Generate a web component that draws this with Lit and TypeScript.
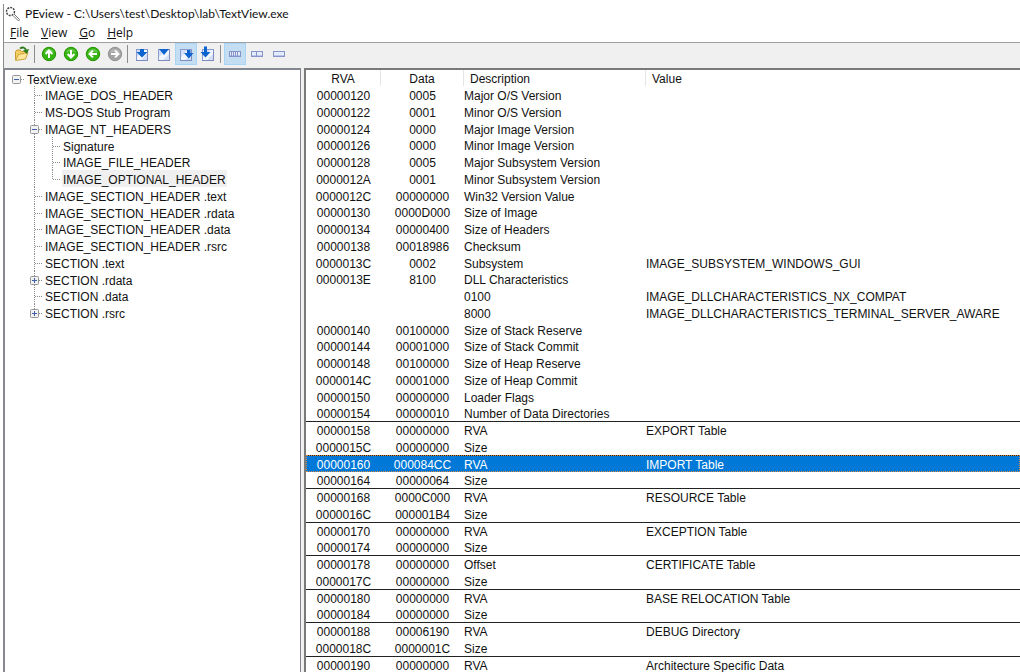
import { LitElement, html, css, svg, nothing } from "lit";
import { customElement, state } from "lit/decorators.js";
import { classMap } from "lit/directives/class-map.js";

type Toggle = "open" | "closed" | "";

interface TreeNode {
  label: string;
  level: number;
  toggle?: Toggle;
  last?: boolean;
}

interface Row {
  rva: string;
  data: string;
  desc: string;
  value?: string;
  rule?: boolean;
}

const TREE: TreeNode[] = [
  { label: "TextView.exe", level: 0, toggle: "open" },
  { label: "IMAGE_DOS_HEADER", level: 1 },
  { label: "MS-DOS Stub Program", level: 1 },
  { label: "IMAGE_NT_HEADERS", level: 1, toggle: "open" },
  { label: "Signature", level: 2 },
  { label: "IMAGE_FILE_HEADER", level: 2 },
  { label: "IMAGE_OPTIONAL_HEADER", level: 2, last: true },
  { label: "IMAGE_SECTION_HEADER .text", level: 1 },
  { label: "IMAGE_SECTION_HEADER .rdata", level: 1 },
  { label: "IMAGE_SECTION_HEADER .data", level: 1 },
  { label: "IMAGE_SECTION_HEADER .rsrc", level: 1 },
  { label: "SECTION .text", level: 1 },
  { label: "SECTION .rdata", level: 1, toggle: "closed" },
  { label: "SECTION .data", level: 1 },
  { label: "SECTION .rsrc", level: 1, toggle: "closed", last: true },
];

const field = (rva: string, data: string, desc: string, value = ""): Row => ({ rva, data, desc, value });

const directory = (
  rva: string,
  address: string,
  sizeRva: string,
  size: string,
  value: string,
  desc = "RVA"
): Row[] => [
  { rva, data: address, desc, value, rule: true },
  { rva: sizeRva, data: size, desc: "Size" },
];

const ROWS: Row[] = [
  field("00000120", "0005", "Major O/S Version"),
  field("00000122", "0001", "Minor O/S Version"),
  field("00000124", "0000", "Major Image Version"),
  field("00000126", "0000", "Minor Image Version"),
  field("00000128", "0005", "Major Subsystem Version"),
  field("0000012A", "0001", "Minor Subsystem Version"),
  field("0000012C", "00000000", "Win32 Version Value"),
  field("00000130", "0000D000", "Size of Image"),
  field("00000134", "00000400", "Size of Headers"),
  field("00000138", "00018986", "Checksum"),
  field("0000013C", "0002", "Subsystem", "IMAGE_SUBSYSTEM_WINDOWS_GUI"),
  field("0000013E", "8100", "DLL Characteristics"),
  field("", "", "0100", "IMAGE_DLLCHARACTERISTICS_NX_COMPAT"),
  field("", "", "8000", "IMAGE_DLLCHARACTERISTICS_TERMINAL_SERVER_AWARE"),
  field("00000140", "00100000", "Size of Stack Reserve"),
  field("00000144", "00001000", "Size of Stack Commit"),
  field("00000148", "00100000", "Size of Heap Reserve"),
  field("0000014C", "00001000", "Size of Heap Commit"),
  field("00000150", "00000000", "Loader Flags"),
  field("00000154", "00000010", "Number of Data Directories"),
  ...directory("00000158", "00000000", "0000015C", "00000000", "EXPORT Table"),
  ...directory("00000160", "000084CC", "00000164", "00000064", "IMPORT Table"),
  ...directory("00000168", "0000C000", "0000016C", "000001B4", "RESOURCE Table"),
  ...directory("00000170", "00000000", "00000174", "00000000", "EXCEPTION Table"),
  ...directory("00000178", "00000000", "0000017C", "00000000", "CERTIFICATE Table", "Offset"),
  ...directory("00000180", "00000000", "00000184", "00000000", "BASE RELOCATION Table"),
  ...directory("00000188", "00006190", "0000018C", "0000001C", "DEBUG Directory"),
  { rva: "00000190", data: "00000000", desc: "RVA", value: "Architecture Specific Data", rule: true },
];

const icon = (body: unknown) => html`<svg width="16" height="16" viewBox="0 0 16 16" aria-hidden="true">${body}</svg>`;

const disc = (fill: string, edge: string, turn: number) =>
  icon(svg`
    <circle cx="8" cy="8" r="6.7" fill=${fill} stroke=${edge} stroke-width="1"/>
    <path d="M3 6.5A5.3 5.3 0 0 1 13 6.5Q8 4.5 3 6.5Z" fill="#fff" opacity=".25"/>
    <path transform="rotate(${turn} 8 8)" d="M8 12V5M4.6 8L8 4.5L11.4 8" fill="none" stroke="#fff" stroke-width="2"/>`);

const pane = svg`
  <rect x="2.5" y="3.5" width="11" height="11" fill="#d3def6" stroke="#8a9bd0"/>
  <path d="M3 11L10 4H13V8L7 14H3Z" fill="#f2f6ff"/>
  <path d="M2 14.5H14M13.5 4V14" stroke="#7f8cc0" fill="none"/>`;

const downArrow = svg`<path d="M6 3H10V6H13.5L8 11.5L2.5 6H6Z" fill="#0b63cf"/>`;

const bar = (cuts: number[]) =>
  icon(svg`
    <rect x="2.5" y="5.5" width="11" height="5" fill="#e4ebfa" stroke="#8794c8"/>
    <path d="M3 9.5H13" stroke="#b9c9ee"/>
    ${cuts.map((x) => svg`<path d="M${x} 6V10" stroke="#8794c8"/>`)}`);

const GREEN = ["#35b512", "#259000"] as const;

const TOOLS = [
  [
    {
      name: "Open",
      art: icon(svg`
        <path d="M1.5 13.5V5.5L3 4H6L7.5 5.5H11.5V8" fill="#f3cf62" stroke="#c59a35"/>
        <path d="M1.5 14.5L4.5 8.5L14 6.5L11.5 13Z" fill="#fde79a" stroke="#cfa23c"/>
        <path d="M6 2.5Q10 0 12 4" fill="none" stroke="#2e7d1c" stroke-width="2"/>
        <path d="M9 4.5L15 3L13 8Z" fill="#2e7d1c"/>`),
    },
  ],
  [
    { name: "Up", art: disc(...GREEN, 0) },
    { name: "Down", art: disc(...GREEN, 180) },
    { name: "Back", art: disc(...GREEN, -90) },
    { name: "Forward", art: disc("#a3a3a3", "#929292", 90) },
  ],
  [
    { name: "Next structure", art: icon(svg`${pane}${downArrow}`) },
    { name: "Collapse", art: icon(svg`${pane}<path d="M3 3H13L8 9Z" fill="#0b63cf"/>`) },
    {
      name: "Move right",
      on: true,
      art: icon(svg`${pane}<path d="M6.5 7H9V4H12.5V7H15.5L10.8 12.5L6 7Z" fill="#0b63cf"/>`),
    },
    {
      name: "Move down",
      art: icon(svg`${pane}<path d="M4 0.5H7V6H10.5L5.5 11.5L0.5 6H4Z" fill="#0b63cf"/>`),
    },
  ],
  [
    { name: "Byte view", on: true, art: bar([4.5, 6.5, 8.5, 10.5]) },
    { name: "Word view", art: bar([7.5]) },
    { name: "Dword view", art: bar([]) },
  ],
] as { name: string; on?: boolean; art: unknown }[][];

@customElement("tree-view")
class TreeView extends LitElement {
  @state() private selected = 6;

  static styles = css`
    :host {
      display: block;
      color: #111;
      font: 12px "Liberation Sans", Arial, sans-serif;
    }
    .list {
      margin: 0;
      padding: 0 0 0 3px;
      list-style: none;
    }
    .item {
      display: flex;
      height: 17px;
    }
    .item:nth-child(4n + 1) {
      height: 16px;
    }
    .guide {
      flex: none;
      width: 18px;
      display: flex;
      align-items: center;
    }
    .guide svg {
      display: block;
    }
    .label {
      border: 0;
      padding: 3px 1px 0;
      background: none;
      color: inherit;
      font: inherit;
      line-height: 14px;
      white-space: nowrap;
    }
    .label.selected {
      background: #f0f0f0;
    }
  `;

  private guide(node: TreeNode) {
    return html`<span class="guide">
      <svg width="18" height="17" viewBox="0 0 18 17" aria-hidden="true">
        ${node.level > 0
          ? svg`<path d="M8.5 0V${node.last ? 9 : 17}" stroke="#8c8c8c" stroke-dasharray="1 1"/>`
          : nothing}
        <path d="M9 9.5H17" stroke="#8c8c8c" stroke-dasharray="1 1" />
        ${node.toggle
          ? svg`<rect x="4.5" y="5.5" width="8" height="8" rx="1" fill="#f2f2f2" stroke="#969696"/>
              <path d="M6 9.5H11" stroke="#3f5fa8"/>
              ${node.toggle === "closed" ? svg`<path d="M8.5 7V12" stroke="#3f5fa8"/>` : nothing}`
          : nothing}
      </svg>
    </span>`;
  }

  private spacer(level: number) {
    return html`<span class="guide">
      ${level === 1
        ? html`<svg width="18" height="17" viewBox="0 0 18 17" aria-hidden="true">
            <path d="M8.5 0V17" stroke="#8c8c8c" stroke-dasharray="1 1" />
          </svg>`
        : nothing}
    </span>`;
  }

  render() {
    return html`<ul class="list" role="tree" aria-label="File structure">
      ${TREE.map(
        (node, i) => html`<li class="item" role="treeitem" aria-level=${node.level + 1}>
          ${Array.from({ length: node.level }, (_, level) => this.spacer(level))}${this.guide(node)}
          <button
            class=${classMap({ label: true, selected: i === this.selected })}
            @click=${() => (this.selected = i)}
          >${node.label}</button>
        </li>`
      )}
    </ul>`;
  }
}

@customElement("data-list")
class DataList extends LitElement {
  @state() private current = "00000160";

  static styles = css`
    :host {
      display: block;
      color: #111;
      font: 12px "Liberation Sans", Arial, sans-serif;
    }
    .grid {
      width: 100%;
      table-layout: fixed;
      border-collapse: separate;
      border-spacing: 0;
    }
    .rva {
      width: 75px;
    }
    .data {
      width: 83px;
    }
    .desc {
      width: 182px;
    }
    .grid th,
    .grid td {
      box-sizing: border-box;
      height: 17px;
      padding: 3px 0 0;
      font-weight: normal;
      line-height: 14px;
      text-align: left;
      white-space: nowrap;
    }
    .grid th {
      height: 16px;
      padding: 2px 6px 0;
      border-right: 1px solid #e5e5e5;
    }
    .grid th:last-child {
      border-right: 0;
    }
    .grid tbody tr:nth-child(4n) td {
      height: 16px;
      padding-top: 2px;
    }
    .grid .mid {
      text-align: center;
    }
    .grid .rule td {
      box-shadow: inset 0 1px #222;
    }
    .grid .current td {
      background: #0078d7;
      color: #fff;
    }
    .grid .current {
      outline: 1px dotted #d98a3c;
      outline-offset: -1px;
    }
  `;

  render() {
    return html`<table class="grid">
      <colgroup>
        <col class="rva" />
        <col class="data" />
        <col class="desc" />
        <col />
      </colgroup>
      <thead>
        <tr>
          <th class="mid" scope="col">RVA</th>
          <th class="mid" scope="col">Data</th>
          <th scope="col">Description</th>
          <th scope="col">Value</th>
        </tr>
      </thead>
      <tbody>
        ${ROWS.map(
          (row) => html`<tr
            class=${classMap({ rule: !!row.rule, current: row.rva === this.current })}
            @click=${() => (this.current = row.rva)}
          >
            <td class="mid">${row.rva}</td>
            <td class="mid">${row.data}</td>
            <td>${row.desc}</td>
            <td>${row.value}</td>
          </tr>`
        )}
      </tbody>
    </table>`;
  }
}

@customElement("app-root")
class AppRoot extends LitElement {
  static styles = css`
    :host {
      display: block;
      background: #fff;
      color: #111;
      font: 12px/17px "Open Sans", "Noto Sans", sans-serif;
    }
    .window {
      box-sizing: border-box;
      height: 100vh;
      padding: 4px 0 0 3px;
      display: flex;
      flex-direction: column;
    }
    .frame {
      flex: 1;
      min-height: 0;
      display: flex;
      flex-direction: column;
      border-left: 1px solid #8a8a8a;
    }
    .title {
      display: flex;
      align-items: center;
      gap: 4px;
      height: 19px;
      padding-left: 1px;
    }
    .title h1 {
      margin: 0;
      font: 12px/17px Lato, "Open Sans", sans-serif;
    }
    .menu {
      display: flex;
      gap: 12px;
      height: 19px;
      padding-left: 6px;
    }
    .menu button {
      border: 0;
      padding: 0;
      background: none;
      color: inherit;
      font: inherit;
    }
    .toolbar {
      display: flex;
      align-items: flex-start;
      height: 25px;
      padding-left: 7px;
      border-top: 1px solid #a0a0a0;
      background: #f0f0f0;
    }
    .group {
      display: flex;
    }
    .group + .group::before {
      content: "";
      width: 1px;
      height: 18px;
      margin: 2px 3px 0 1px;
      background: #8c8c8c;
    }
    .tool {
      box-sizing: border-box;
      width: 22px;
      height: 22px;
      padding: 2px;
      border: 1px solid transparent;
      background: none;
    }
    .tool.on {
      border-color: #a8d4f6;
      background: #c3def3;
    }
    .tool svg {
      display: block;
    }
    .panes {
      flex: 1;
      min-height: 0;
      display: grid;
      grid-template-columns: 297px minmax(0, 1fr);
      gap: 3px;
      background: #f0f0f0;
    }
    .tree {
      overflow: hidden;
      border: solid #828790;
      border-width: 2px 1px 0 1px;
      background: #fff;
    }
    .records {
      overflow: hidden;
      border: solid #7a7a7a;
      border-width: 2px 0 0 2px;
      background: #fff;
    }
  `;

  render() {
    return html`<div class="window">
      <div class="frame">
        <header class="title">
          <svg width="16" height="16" viewBox="0 0 16 16" aria-hidden="true">
            <circle cx="5.5" cy="5.5" r="4" fill="#fff" stroke="#444" stroke-width="1.4" stroke-dasharray="2 1" />
            <path d="M9 8L14.5 13.5L13.5 15L8 9.5" fill="#fff" stroke="#777" />
          </svg>
          <h1>PEview - C:\\Users\\test\\Desktop\\lab\\TextView.exe</h1>
        </header>
        <nav class="menu" aria-label="Menu">
          <button><u>F</u>ile</button>
          <button><u>V</u>iew</button>
          <button><u>G</u>o</button>
          <button><u>H</u>elp</button>
        </nav>
        <div class="toolbar" role="toolbar" aria-label="Tools">
          ${TOOLS.map(
            (group) => html`<div class="group">
              ${group.map(
                (tool) => html`<button class=${classMap({ tool: true, on: !!tool.on })} aria-label=${tool.name}>
                  ${tool.art}
                </button>`
              )}
            </div>`
          )}
        </div>
        <main class="panes">
          <tree-view class="tree"></tree-view>
          <data-list class="records"></data-list>
        </main>
      </div>
    </div>`;
  }
}
